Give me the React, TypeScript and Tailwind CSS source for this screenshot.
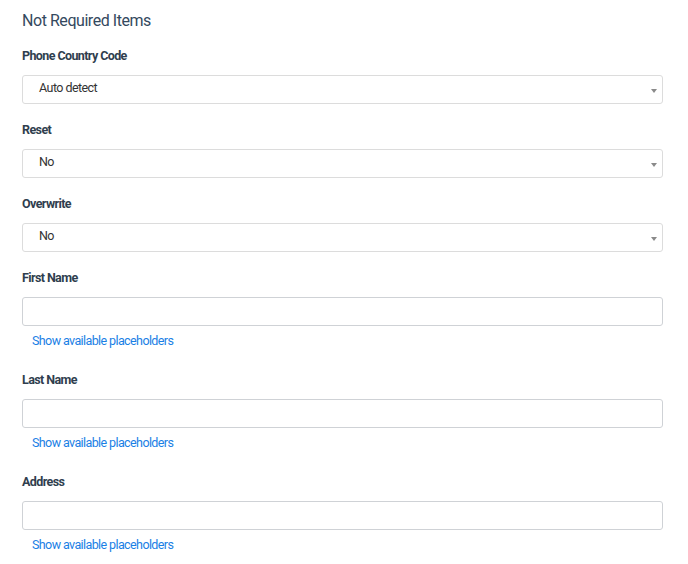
const selects = [
  { label: "Phone Country Code", value: "Auto detect" },
  { label: "Reset", value: "No" },
  { label: "Overwrite", value: "No" },
];

const inputs = ["First Name", "Last Name", "Address"];

function Label({ children }: { children: string }) {
  return (
    <div className="h-[16px] leading-[18px] text-[12.5px] tracking-[-0.6px] font-bold text-[#2f3e4e] mb-[12px]">
      {children}
    </div>
  );
}

export default function App() {
  return (
    <div
      className="w-full min-h-screen bg-white pl-[22px] pr-[25px] pt-[10px]"
      style={{ fontFamily: "Roboto, 'Liberation Sans', sans-serif" }}
    >
      <h2 className="h-[20px] leading-[22px] text-[16px] tracking-[-0.45px] text-[#34495e] mb-[17px]">
        Not Required Items
      </h2>

      {selects.map((s) => (
        <div key={s.label} className="mb-[17px]">
          <Label>{s.label}</Label>
          <div className="h-[29px] flex items-center justify-between border border-[#dcdcdc] rounded-[3px] pl-4 pr-[5px]">
            <span className="text-[12.5px] tracking-[-0.55px] text-[#333] mb-[2px]">{s.value}</span>
            <span className="mt-[3px] w-0 h-0 border-l-[3.5px] border-r-[3.5px] border-t-[4px] border-l-transparent border-r-transparent border-t-[#8a8a8a]" />
          </div>
        </div>
      ))}

      {inputs.map((name) => (
        <div key={name} className="mb-[23px]">
          <Label>{name}</Label>
          <div className="h-[29px] border border-[#cfd2d6] rounded-[3px]" />
          <div className="mt-[6px] h-[16px] leading-[18px] pl-[10px] text-[12.5px] tracking-[-0.6px] text-[#1a80e5]">
            Show available placeholders
          </div>
        </div>
      ))}
    </div>
  );
}
